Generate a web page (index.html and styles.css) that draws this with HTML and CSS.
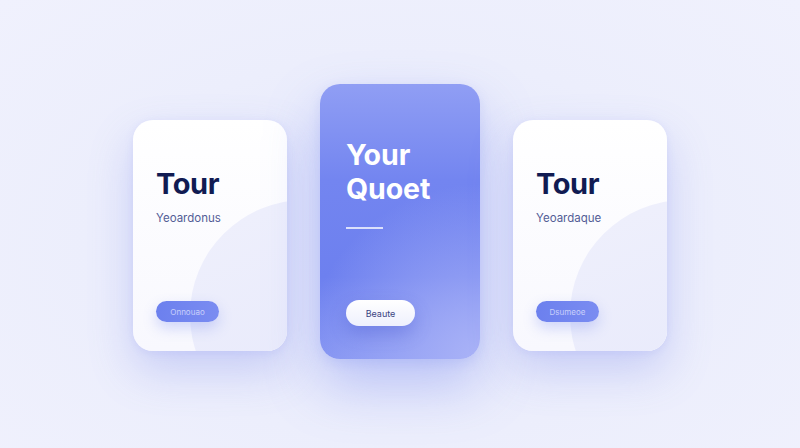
FILE: index.html
```html
<!DOCTYPE html>
<html lang="en">
<head>
    <meta charset="UTF-8">
    <meta name="viewport" content="width=device-width, initial-scale=1.0">
    <title>Quotes</title>
    <link rel="stylesheet" href="styles.css">
</head>
<body>
    <div class="cards">
        <div class="card card-side">
            <h2 class="card-title">Tour</h2>
            <p class="card-sub">Yeoardonus</p>
            <button class="pill pill-blue">Onnouao</button>
        </div>

        <div class="card card-main">
            <h2 class="main-title">Your<br>Quoet</h2>
            <div class="divider"></div>
            <button class="pill pill-white">Beaute</button>
        </div>

        <div class="card card-side">
            <h2 class="card-title">Tour</h2>
            <p class="card-sub">Yeoardaque</p>
            <button class="pill pill-blue">Dsumeoe</button>
        </div>
    </div>
</body>
</html>
```

FILE: styles.css
```css
body {
    margin: 0;
    height: 448px;
    overflow: hidden;
    font-family: Inter, "Noto Sans", sans-serif;
    background: radial-gradient(ellipse at 50% 55%, #e4e7fb 0%, #eceefc 55%, #f0f1fd 100%);
}
.cards {
    display: flex;
    justify-content: center;
    align-items: flex-start;
    gap: 33px;
    padding-top: 84px;
}
.card {
    position: relative;
    overflow: hidden;
    box-sizing: border-box;
    border-radius: 20px;
    display: flex;
    flex-direction: column;
}
.card-side {
    width: 154px;
    height: 231px;
    margin-top: 36px;
    padding: 47px 23px 0;
    background: linear-gradient(180deg, #ffffff 0%, #f8f8fe 100%);
    box-shadow: 0 20px 44px rgba(120, 134, 235, 0.3), 0 2px 8px rgba(120, 134, 235, 0.12);
}
/* soft circle in the lower right corner */
.card-side::after {
    content: "";
    position: absolute;
    left: 57px;
    top: 80px;
    width: 230px;
    height: 230px;
    border-radius: 50%;
    background: linear-gradient(160deg, #eff0fc 0%, #e6e8fb 100%);
}
.card-side > * {
    position: relative;
    z-index: 1;
}
.card-title {
    margin: 0;
    font-size: 29px;
    font-weight: 700;
    line-height: 34px;
    color: #111b52;
    letter-spacing: -0.4px;
}
.card-sub {
    margin: 10px 0 0;
    font-size: 11.5px;
    color: #535c96;
}
.pill {
    border: none;
    border-radius: 12px;
    font-family: inherit;
    padding: 0;
    font-size: 8px;
}
.pill-blue {
    width: 63px;
    height: 21px;
    margin-top: 76px;
    background: linear-gradient(90deg, #6c80ee, #7a8cf1);
    color: #c9d0fb;
    box-shadow: 0 6px 14px rgba(108, 128, 238, 0.3);
}
.card-main {
    width: 160px;
    height: 275px;
    padding: 54px 25px 0 26px;
    background:
        radial-gradient(circle at 100% 100%, #aab3f7 0%, rgba(170, 179, 247, 0) 55%),
        linear-gradient(180deg, #909ef4 0%, #7385f0 35%, #6d80ef 70%, #8393f2 100%);
    box-shadow: 0 26px 54px rgba(108, 126, 238, 0.38), 0 4px 12px rgba(108, 126, 238, 0.15);
}
.main-title {
    margin: 0;
    font-size: 28.5px;
    font-weight: 700;
    line-height: 34px;
    color: #ffffff;
    letter-spacing: -0.1px;
}
.divider {
    width: 37px;
    height: 2px;
    margin-top: 21px;
    background: rgba(255, 255, 255, 0.75);
}
.pill-white {
    width: 69px;
    height: 26px;
    margin-top: 71px;
    border-radius: 13px;
    background: linear-gradient(180deg, #ffffff 0%, #eef0fd 100%);
    color: #3a4482;
    font-size: 9px;
    box-shadow: 0 8px 18px rgba(60, 76, 200, 0.3);
}
```
